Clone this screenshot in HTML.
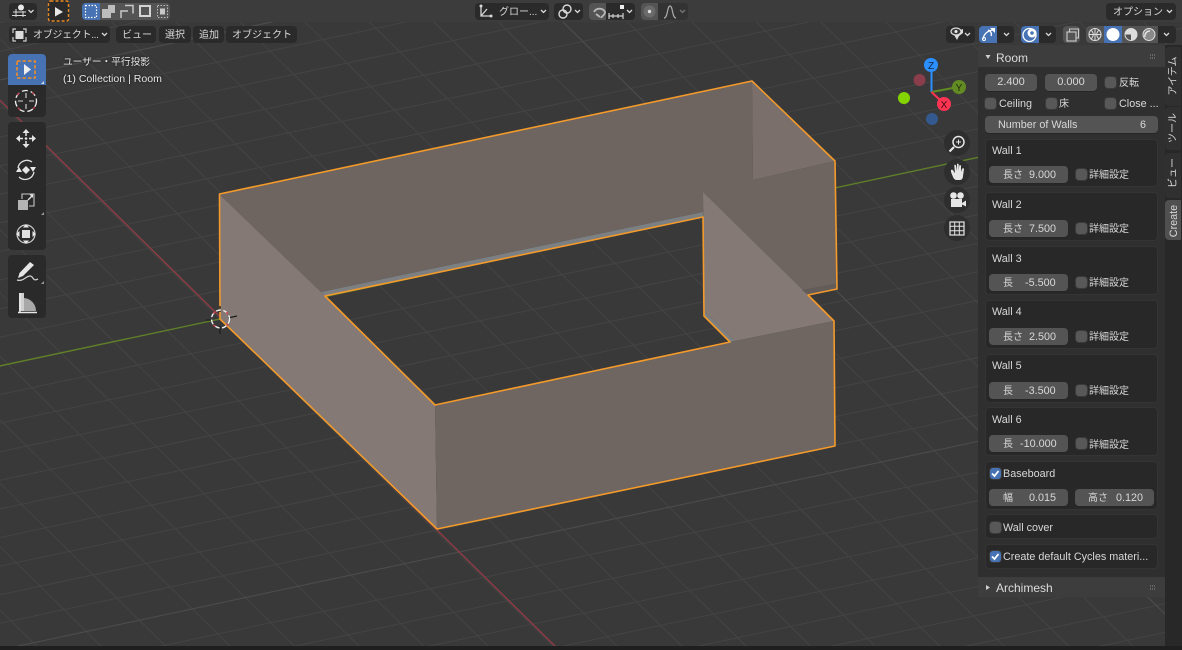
<!DOCTYPE html>
<html lang="ja"><head><meta charset="utf-8"><title>Room</title>
<style>
html,body{margin:0;padding:0;background:#393939;width:1182px;height:650px;overflow:hidden;}
#r{position:relative;width:1182px;height:650px;overflow:hidden;background:#393939;font-family:"Liberation Sans","Noto Sans CJK JP",sans-serif;font-size:10.8px;color:#d8d8d8;filter:blur(.3px);}
#r div{position:absolute;box-sizing:border-box;}
svg{position:absolute;left:0;top:0;}
.d{background:#2a2a2a;border-radius:4px;}
.g{background:#545454;border-radius:4px;}
.bl{background:#4772b3;}
.t{white-space:nowrap;line-height:14px;height:14px;}
#r .j{font-size:10px;margin-top:1.5px;}
.f{background:#545454;border-radius:4px;height:17px;box-shadow:0 1px 0 #262626;}
.c{background:#585858;border-radius:3px;width:11px;height:11px;box-shadow:0 0 0 1px #3a3a3a;}
#r .cb{background:#4772b3;}
.box{left:985px;width:173px;background:#282828;border:1px solid #343434;border-radius:4px;}
.h{left:978px;width:187px;background:#3d3d3d;}
.tab{left:1165px;width:16px;background:#303030;border-radius:4px 0 0 4px;}
#r .v{transform:rotate(-90deg);transform-origin:center;text-align:center;width:60px;left:1143.500px;margin-top:0;}
.ov{color:#e8e8e8;text-shadow:0 0 2px #111;}
</style></head><body><div id="r">

<svg width="1182" height="650" viewBox="0 0 1182 650" fill="none">
<path stroke="#444444" stroke-width="1" d="M0 -5.9l1182 -252m-1182 280.6l1182 -252m-1182 280.6l1182 -252m-1182 280.6l1182 -252m-1182 280.6l1182 -252m-1182 280.6l1182 -252m-1182 280.6l1182 -252m-1182 280.6l1182 -252m-1182 280.6l1182 -252m-1182 280.6l1182 -252m-1182 280.6l1182 -252m-1182 280.6l1182 -252m-1182 280.6l1182 -252m-1182 280.6l1182 -252m-1182 280.6l1182 -252m-1182 280.6l1182 -252m-1182 280.6l1182 -252m-1182 280.6l1182 -252m-1182 280.6l1182 -252m-1182 280.6l1182 -252m-1182 280.6l1182 -252m-1182 280.6l1182 -252m-1182 280.6l1182 -252M143 650L1182 428.5M277 650L1182 457.1M411 650L1182 485.7M545 650L1182 514.3M680 650L1182 542.9M814 650L1182 571.5M948 650L1182 600.1M1082 650L1182 628.7"/>
<path stroke="#444444" stroke-width="1" d="M-620.4 0l661 650m-596.5 -650l661 650m-596.5 -650l661 650m-596.5 -650l661 650m-596.5 -650l661 650m-596.5 -650l661 650m-596.5 -650l661 650m-596.5 -650l661 650m-596.5 -650l661 650m-596.5 -650l661 650m-596.5 -650l661 650m-596.5 -650l661 650m-596.5 -650l661 650m-596.5 -650l661 650m-596.5 -650l661 650m-596.5 -650l661 650m-596.5 -650l661 650m-596.5 -650l661 650m-596.5 -650l661 650m-596.5 -650l661 650m-596.5 -650l661 650m-596.5 -650l661 650m-596.5 -650l661 650m-596.5 -650l661 650m-596.5 -650l661 650m-596.5 -650l661 650m-596.5 -650l661 650m-596.5 -650l661 650"/>
<path stroke="#4c4c4c" stroke-width="1.1" d="M0 649.9L1182 397.9M0 79.9L1182 -172M540.6 0l661 650"/>
<path stroke="#5f7f28" stroke-width="1.4" d="M0 365.9L1182 113.9"/>
<path stroke="#8f3d45" stroke-width="1.4" d="M-102 0l661 650"/>

<polygon fill="#6e6460" points="219,194 752,81 753,180 835,161 837,289 808,295 703,192 703,212 321,292"/>
<polygon fill="#7a6f6a" points="752,81 835,161 753,180"/>
<polygon fill="#7c8083" points="321,292 703,212 703,217 325,296"/>
<polygon fill="#847974" points="219,194 321,292 435,405 437,529 220,319"/>
<polygon fill="#847974" points="703,192 808,295 834,321 735,341 704,311"/>
<polygon fill="#7c8083" points="704,311 735,341 730,342 704,316"/>
<polygon fill="#6f6561" points="435,405 730,342 834,321 835,446 437,529"/>
<polygon fill="#645c59" points="802,290 837,283 837,289 808,295"/>
<path stroke="#f39a2b" stroke-width="1.6" stroke-linejoin="round" d="M219.5 194L752 81L835 161L837 289L808 295L834 321L835 446L437 529L220 319Z"/>
<path stroke="#f39a2b" stroke-width="1.6" stroke-linejoin="round" d="M325 296L703 217L704 316L730 342L435 405Z"/>
<path stroke="#1e1e1e" stroke-width="1.3" d="M220 306v6M220 326v8M206 320h6M228 318l9 -2"/>
<circle cx="220.500" cy="319" r="9" stroke="#eeeeee" stroke-width="1.4" stroke-dasharray="5 2.5"/>
<circle cx="220.500" cy="319" r="9" stroke="#d04050" stroke-width="1.4" stroke-dasharray="2.5 12" stroke-dashoffset="-5"/>
</svg>

<!-- sidebar background -->
<div style="left:978px;top:67px;width:187px;height:510px;background:#2f2f2f"></div>
<div style="left:1165px;top:45px;width:17px;height:602px;background:#282828"></div>
<div style="left:0;top:646px;width:1182px;height:4px;background:#1f1f1f"></div>
<div class="h" style="top:45px;height:22px;border-radius:3px 3px 0 0"></div>
<div class="h" style="top:577px;height:20px"></div>
<div class="t" style="left:996px;top:51px;font-size:12px;color:#dcdcdc">Room</div>
<div class="t" style="left:996px;top:581px;font-size:12px;color:#dcdcdc">Archimesh</div>

<div class="f" style="left:985px;top:74px;width:52px;text-align:center;line-height:16px;font-size:11px">2.400</div>
<div class="f" style="left:1045px;top:74px;width:52px;text-align:center;line-height:16px;font-size:11px">0.000</div>
<div class="c" style="left:1105px;top:77px"></div><div class="t j" style="left:1119px;top:75px">反転</div>
<div class="c" style="left:985px;top:98px"></div><div class="t" style="left:999px;top:97px">Ceiling</div>
<div class="c" style="left:1046px;top:98px"></div><div class="t j" style="left:1059px;top:96px">床</div>
<div class="c" style="left:1105px;top:98px"></div><div class="t" style="left:1119px;top:97px">Close ...</div>
<div class="f" style="left:985px;top:116px;width:173px"></div>
<div class="t" style="left:998px;top:118px">Number of Walls</div><div class="t" style="left:1140px;top:118px">6</div>

<div class="box" style="top:139px;height:48px"></div><div class="t" style="left:992px;top:144px">Wall 1</div><div class="f" style="left:989px;top:166px;width:79px"></div><div class="t j" style="left:1003px;top:167px">長さ</div><div class="t" style="left:1029px;top:168px">9.000</div><div class="c" style="left:1076px;top:169px"></div><div class="t j" style="left:1089px;top:167px">詳細設定</div>
<div class="box" style="top:192px;height:49px"></div><div class="t" style="left:992px;top:198px">Wall 2</div><div class="f" style="left:989px;top:220px;width:79px"></div><div class="t j" style="left:1003px;top:221px">長さ</div><div class="t" style="left:1029px;top:222px">7.500</div><div class="c" style="left:1076px;top:223px"></div><div class="t j" style="left:1089px;top:221px">詳細設定</div>
<div class="box" style="top:246px;height:49px"></div><div class="t" style="left:992px;top:252px">Wall 3</div><div class="f" style="left:989px;top:274px;width:79px"></div><div class="t j" style="left:1003px;top:275px">長</div><div class="t" style="left:1025px;top:276px">-5.500</div><div class="c" style="left:1076px;top:277px"></div><div class="t j" style="left:1089px;top:275px">詳細設定</div>
<div class="box" style="top:300px;height:49px"></div><div class="t" style="left:992px;top:305px">Wall 4</div><div class="f" style="left:989px;top:328px;width:79px"></div><div class="t j" style="left:1003px;top:329px">長さ</div><div class="t" style="left:1029px;top:330px">2.500</div><div class="c" style="left:1076px;top:331px"></div><div class="t j" style="left:1089px;top:329px">詳細設定</div>
<div class="box" style="top:354px;height:49px"></div><div class="t" style="left:992px;top:359px">Wall 5</div><div class="f" style="left:989px;top:382px;width:79px"></div><div class="t j" style="left:1003px;top:383px">長</div><div class="t" style="left:1025px;top:384px">-3.500</div><div class="c" style="left:1076px;top:385px"></div><div class="t j" style="left:1089px;top:383px">詳細設定</div>
<div class="box" style="top:407px;height:49px"></div><div class="t" style="left:992px;top:413px">Wall 6</div><div class="f" style="left:989px;top:435px;width:79px"></div><div class="t j" style="left:1003px;top:436px">長</div><div class="t" style="left:1020px;top:437px">-10.000</div><div class="c" style="left:1076px;top:438px"></div><div class="t j" style="left:1089px;top:437px">詳細設定</div>

<div class="box" style="top:461px;height:49px"></div>
<div class="c cb" style="left:990px;top:468px"></div><div class="t" style="left:1003px;top:467px">Baseboard</div>
<div class="f" style="left:989px;top:489px;width:79px"></div><div class="t j" style="left:1003px;top:490px">幅</div><div class="t" style="left:1029px;top:491px">0.015</div>
<div class="f" style="left:1075px;top:489px;width:79px"></div><div class="t j" style="left:1088px;top:490px">高さ</div><div class="t" style="left:1116px;top:491px">0.120</div>
<div class="box" style="top:514px;height:25px"></div>
<div class="c" style="left:990px;top:522px"></div><div class="t" style="left:1003px;top:521px">Wall cover</div>
<div class="box" style="top:544px;height:25px"></div>
<div class="c cb" style="left:990px;top:551px"></div><div class="t" style="left:1003px;top:550px">Create default Cycles materi...</div>

<!-- tabs -->
<div class="tab" style="top:47px;height:59px"></div>
<div class="tab" style="top:107px;height:43px"></div>
<div class="tab" style="top:153px;height:45px"></div>
<div class="tab" style="top:200px;height:40px;background:#505050"></div>
<div class="t v j" style="top:69px">アイテム</div>
<div class="t v j" style="top:121px">ツール</div>
<div class="t v j" style="top:166px">ビュー</div>
<div class="t v" style="top:214px">Create</div>

<!-- top bar -->
<div style="left:0;top:0;width:1182px;height:22px;background:#3c3c3c"></div>
<div class="d" style="left:9px;top:3px;width:28px;height:17px"></div>
<div class="d" style="left:48px;top:0;width:21px;height:22px"></div>
<div class="g" style="left:82px;top:3px;width:88px;height:17px"></div>
<div class="bl" style="left:82px;top:3px;width:18px;height:17px;border-radius:4px 0 0 4px"></div>
<div class="d" style="left:475px;top:3px;width:74px;height:17px"></div><div class="t j" style="left:499px;top:4px">グロー...</div>
<div class="d" style="left:554px;top:3px;width:29px;height:17px"></div>
<div class="d" style="left:589px;top:3px;width:46px;height:17px"></div>
<div class="g" style="left:589px;top:3px;width:17px;height:17px;border-radius:4px 0 0 4px"></div>
<div class="d" style="left:641px;top:3px;width:47px;height:17px;background:#333"></div>
<div class="g" style="left:641px;top:3px;width:17px;height:17px;border-radius:4px 0 0 4px"></div>
<div class="d" style="left:1106px;top:3px;width:70px;height:17px"></div><div class="t j" style="left:1113px;top:4px">オプション</div>

<!-- row 2 -->
<div class="d" style="left:9px;top:26px;width:101px;height:17px"></div><div class="t j" style="left:33px;top:27px;letter-spacing:-.3px">オブジェクト...</div>
<div class="d" style="left:116px;top:26px;width:40px;height:17px"></div><div class="t j" style="left:122px;top:27px">ビュー</div>
<div class="d" style="left:159px;top:26px;width:32px;height:17px"></div><div class="t j" style="left:165px;top:27px">選択</div>
<div class="d" style="left:193px;top:26px;width:31px;height:17px"></div><div class="t j" style="left:199px;top:27px">追加</div>
<div class="d" style="left:226px;top:26px;width:71px;height:17px"></div><div class="t j" style="left:232px;top:27px">オブジェクト</div>

<div class="d" style="left:946px;top:26px;width:29px;height:17px"></div>
<div class="d" style="left:979px;top:26px;width:35px;height:17px"></div><div class="bl" style="left:979px;top:26px;width:18px;height:17px;border-radius:4px 0 0 4px"></div>
<div class="d" style="left:1021px;top:26px;width:35px;height:17px"></div><div class="bl" style="left:1021px;top:26px;width:18px;height:17px;border-radius:4px 0 0 4px"></div>
<div class="g" style="left:1063px;top:26px;width:17px;height:17px"></div>
<div class="d" style="left:1086px;top:26px;width:90px;height:17px"></div>
<div class="g" style="left:1086px;top:26px;width:72px;height:17px;border-radius:4px 0 0 4px"></div>
<div class="bl" style="left:1104px;top:26px;width:18px;height:17px"></div>

<!-- tool groups -->
<div class="d" style="left:8px;top:54px;width:38px;height:63px"></div>
<div class="bl" style="left:8px;top:54px;width:38px;height:31px;border-radius:4px 4px 0 0"></div>
<div class="d" style="left:8px;top:122px;width:38px;height:128px"></div>
<div class="d" style="left:8px;top:255px;width:38px;height:63px"></div>

<!-- viewport labels -->
<div class="t ov j" style="left:63px;top:54px;font-size:9.7px">ユーザー・平行投影</div>
<div class="t ov" style="left:63px;top:72px;font-size:10.55px">(1) Collection | Room</div>

<!-- icons -->
<svg width="1182" height="650" viewBox="0 0 1182 650" fill="none">
<!-- chevrons -->
<path stroke="#d8d8d8" stroke-width="1.3" d="M28.500 10l2.500 2.500l2.500 -2.500M102 33l2.500 2.500l2.500 -2.500M541 10l2.500 2.500l2.500 -2.500M575 10l2.500 2.500l2.500 -2.500M627 10l2.500 2.500l2.500 -2.500M1167 10l2.500 2.500l2.500 -2.500M965 33l2.500 2.500l2.500 -2.500M1004 33l2.500 2.500l2.500 -2.500M1046 33l2.500 2.500l2.500 -2.500M1164 33l2.500 2.500l2.500 -2.500"/>
<path stroke="#777" stroke-width="1.3" d="M680 10l2.500 2.500l2.500 -2.500"/>
<!-- editor type -->
<circle cx="21" cy="7.500" r="3" fill="#e8e8e8"/>
<path stroke="#d8d8d8" stroke-width="1" d="M13 12h13M12 15.500h14M16 9v8M23 11v6"/>
<!-- select top -->
<rect x="48.500" y="1" width="20" height="20" rx="2" stroke="#ea8a24" stroke-width="1.4" stroke-dasharray="3 2"/>
<path fill="#e8e8e8" d="M55 7v9.500l8 -4.500z"/>
<!-- mode icons -->
<rect x="85.500" y="5.500" width="11" height="12" stroke="#fff" stroke-width="1.2" stroke-dasharray="1.500 1.500"/>
<path fill="#bdbdbd" d="M102 9h6v-4h7v8h-4v5h-9z"/>
<path stroke="#c8c8c8" stroke-width="1.5" fill="none" d="M125 5.500h8v8M121 18v-7h7"/>
<rect x="140" y="6" width="10" height="10" stroke="#d4d4d4" stroke-width="2"/>
<rect x="157.500" y="5.500" width="10" height="12" stroke="#bbb" stroke-width="1" stroke-dasharray="1.500 1.500"/>
<rect x="160" y="8.500" width="5" height="6" fill="#c8c8c8"/>
<!-- object mode icon -->
<path stroke="#cfcfcf" stroke-width="1.200" d="M13 33v-4h3M23 29h3v4M26 37v4h-3M16 41h-3v-4"/>
<rect x="15.500" y="31" width="8" height="8" fill="#dddddd"/>
<!-- gizmo selects center -->
<path stroke="#d8d8d8" stroke-width="1.300" d="M481 6v10h10M481 16l6 -7"/>
<circle cx="481" cy="6" r="1.500" fill="#d8d8d8"/><circle cx="491" cy="16" r="1.500" fill="#d8d8d8"/>
<circle cx="563" cy="14" r="4" stroke="#d8d8d8" stroke-width="1.400"/><circle cx="567" cy="9" r="4" stroke="#d8d8d8" stroke-width="1.400"/>
<path stroke="#b8b8b8" stroke-width="1.800" d="M594 12a6 5.500 0 0 1 11 0c0 3 -3 4 -4 6M596 14l4 3"/>
<path stroke="#cfcfcf" stroke-width="1.200" d="M609 13v6M623 13v6M609 16h14M613 14v4M618 14v4"/><rect x="620" y="5" width="4" height="4" fill="#eee"/>
<circle cx="649.500" cy="11.500" r="6" fill="#6a6a6a"/><circle cx="649.500" cy="11.500" r="1.700" fill="#dddddd"/>
<path stroke="#aaa" stroke-width="1.200" d="M664 18c4 0 3 -12 6 -12s2 12 6 12"/>
<!-- right header icons -->
<path fill="#dddddd" d="M953 33l10 -4v4l-4 3l-2 4z"/>
<ellipse cx="956" cy="31.500" rx="5" ry="3.500" fill="#3a3a3a" stroke="#ddd" stroke-width="1.200"/><circle cx="956" cy="31.500" r="1.500" fill="#eee"/>
<path stroke="#fff" stroke-width="1.300" d="M983 39c1 -6 6 -9 11 -9M991 36c1 -2 0 -5 -3 -6"/><circle cx="984" cy="39" r="1.500" stroke="#fff"/><path fill="#fff" d="M990 28h5v5z"/>
<circle cx="1029.500" cy="35" r="6.500" stroke="#fff" stroke-width="1.300"/><circle cx="1032" cy="33" r="4.500" fill="#fff"/><circle cx="1032" cy="33" r="1.800" fill="#4772b3"/>
<rect x="1067" y="32" width="9" height="9" stroke="#ccc" stroke-width="1.100"/><path stroke="#ccc" stroke-width="1.100" d="M1069.500 32v-3h9v9h-3"/>
<circle cx="1095" cy="34.500" r="6" stroke="#ddd" stroke-width="1.100"/><path stroke="#ddd" d="M1089 34.500h12M1095 28.500v12M1091 30c3 3 3 6 0 9M1099 30c-3 3 -3 6 0 9"/>
<circle cx="1113" cy="34.500" r="6.500" fill="#fff"/>
<circle cx="1131" cy="34.500" r="6" stroke="#ddd" stroke-width="1"/><path fill="#ddd" d="M1131 28.500a6 6 0 0 1 0 12zM1131 34.500h-6a6 6 0 0 1 6 -6z"/>
<circle cx="1149" cy="34.500" r="6" fill="#8a8a8a" stroke="#ddd"/><path stroke="#eee" stroke-width="1.300" d="M1145 37a5 5 0 0 1 5 -6"/>

<!-- panel triangle/grips -->
<path fill="#cfcfcf" d="M985.500 55h5l-2.500 4zM986 585v5l4 -2.500z"/>
<path stroke="#666" stroke-width="2" stroke-dasharray="1 1" d="M1150 55h6M1150 58h6M1150 586h6M1150 589h6"/>
<!-- checks -->
<path stroke="#fff" stroke-width="1.800" d="M992 473.500l2.500 2.500l4 -5M992 556.500l2.500 2.500l4 -5"/>

<!-- tools -->
<rect x="17" y="61" width="18" height="17" stroke="#ee8d26" stroke-width="1.600" stroke-dasharray="3.500 2"/>
<path fill="#eeeeee" d="M24 64v11l7 -5.500z"/>
<path fill="#cfd7e8" d="M44 81v3h-3z"/>
<circle cx="26" cy="101" r="10.500" stroke="#eeeeee" stroke-width="1.300" stroke-dasharray="6 3"/>
<circle cx="26" cy="101" r="10.500" stroke="#c0404a" stroke-width="1.300" stroke-dasharray="3 13.500" stroke-dashoffset="-6"/>
<path stroke="#d8d8d8" stroke-width="1.100" d="M26 93v5M26 104v5M18 101h5M29 101h5"/>
<!-- move -->
<path fill="#e6e6e6" d="M26 129l3.500 4h-7zM26 148l3.500 -4h-7zM16 138.500l4 -3.500v7zM36 138.500l-4 -3.500v7z"/>
<path stroke="#e6e6e6" stroke-width="1.500" d="M26 133v3M26 141v3M20 138.500h3M29 138.500h3"/><circle cx="26" cy="138.500" r="1.300" fill="#e6e6e6"/>
<!-- rotate -->
<path stroke="#e0e0e0" stroke-width="1.300" d="M18 168a9 9 0 0 1 14 -6M34 172a9 9 0 0 1 -15 5"/>
<path fill="#e6e6e6" d="M16 172l3 -5l3 5zM36 167l-3 5l-3 -5zM26 166l4 4l-4 4l-4 -4z"/>
<!-- scale -->
<rect x="18" y="200" width="10" height="10" fill="#b4b4b4"/>
<path stroke="#c8c8c8" stroke-width="1.100" d="M22 199v-5h12v12h-5"/>
<path stroke="#e6e6e6" stroke-width="1.300" d="M28 200l4.500 -4.500"/><path fill="#e6e6e6" d="M29.500 194.500h3.500v3.500z"/>
<path fill="#999" d="M44 212v3h-3z"/>
<!-- transform -->
<circle cx="26" cy="234" r="9" stroke="#d0d0d0" stroke-width="1.200"/><rect x="21.500" y="229.500" width="9" height="9" fill="#e0e0e0" stroke="#2a2a2a"/>
<path fill="#e6e6e6" d="M26 224l3 3.500h-6zM26 244l3 -3.500h-6zM16 234l3.500 -3v6zM36 234l-3.500 -3v6z"/>
<!-- annotate -->
<path fill="#e6e6e6" d="M30 262l4 3l-11 11l-5 2l1.500 -5z"/>
<path stroke="#cfcfcf" stroke-width="1.300" d="M17 280c6 2 9 -4 13 -4s2 6 8 3"/>
<path fill="#999" d="M44 281v3h-3z"/>
<!-- measure -->
<path fill="#cfcfcf" d="M19 293h5v18h-5z"/>
<path fill="#a8a8a8" d="M24 298a13 13 0 0 1 12 13h-12z"/>
<path stroke="#e8e8e8" stroke-width="1.500" d="M18 312.500h19M20 293v19"/>

<!-- nav gizmos -->
<circle cx="957" cy="143" r="13" fill="#2e2e2e"/><circle cx="957" cy="172" r="13" fill="#2e2e2e"/><circle cx="957" cy="200" r="13" fill="#2e2e2e"/><circle cx="957" cy="228" r="13" fill="#2e2e2e"/>
<circle cx="958.500" cy="142" r="5.500" stroke="#e6e6e6" stroke-width="1.500"/><path stroke="#e6e6e6" stroke-width="2.200" d="M954 147l-4.500 4.500"/><path stroke="#e6e6e6" d="M956 142h5M958.500 139.500v5"/>
<path fill="#e6e6e6" d="M951 172l2 5c1 2 2 3 4 3h3c2 0 3 -2 3 -4l1 -7c0 -1 -1.500 -1 -2 0l-1 3v-6c0 -1.200 -1.500 -1.200 -1.800 0l-.5 5v-6.500c0 -1.200 -1.700 -1.200 -1.700 0v6.500l-1 -5.500c-.3 -1 -1.700 -1 -1.700 .2l.7 7.500l-2 -3c-.8 -1 -2.500 -.5 -2 .8z"/>
<circle cx="953.500" cy="195.500" r="3.300" fill="#e6e6e6"/><circle cx="960.500" cy="195.500" r="3.300" fill="#e6e6e6"/><rect x="951" y="199" width="11" height="8" fill="#e6e6e6"/><path fill="#e6e6e6" d="M962 203l4 -2.500v6l-4 -2z"/>
<rect x="950" y="222" width="14" height="13" stroke="#e6e6e6" stroke-width="1.200"/><path stroke="#e6e6e6" d="M954.700 222v13M959.300 222v13M950 226.300h14M950 230.700h14"/>

<!-- axis gizmo -->
<circle cx="919.500" cy="80" r="6" fill="#8a3d4a"/>
<circle cx="932" cy="119" r="6" fill="#33598f"/>
<circle cx="904" cy="98" r="6" fill="#83d400"/>
<path stroke="#2c8fff" stroke-width="2" d="M931.500 92V72"/>
<path stroke="#628b23" stroke-width="2" d="M931.500 92L953 88"/>
<path stroke="#ff3352" stroke-width="2" d="M931.500 92L940 100"/>
<circle cx="931" cy="65" r="7" fill="#2c8fff"/>
<circle cx="959" cy="87" r="7" fill="#628b23"/>
<circle cx="944" cy="104" r="7" fill="#ff3352"/>
<text x="931" y="69" text-anchor="middle" font-size="10" fill="#14243a" font-family="Liberation Sans, sans-serif">Z</text>
<text x="959" y="91" text-anchor="middle" font-size="10" fill="#1c2a08" font-family="Liberation Sans, sans-serif">Y</text>
<text x="944" y="108" text-anchor="middle" font-size="10" fill="#3a0a12" font-family="Liberation Sans, sans-serif">X</text>
</svg>
</div></body></html>
